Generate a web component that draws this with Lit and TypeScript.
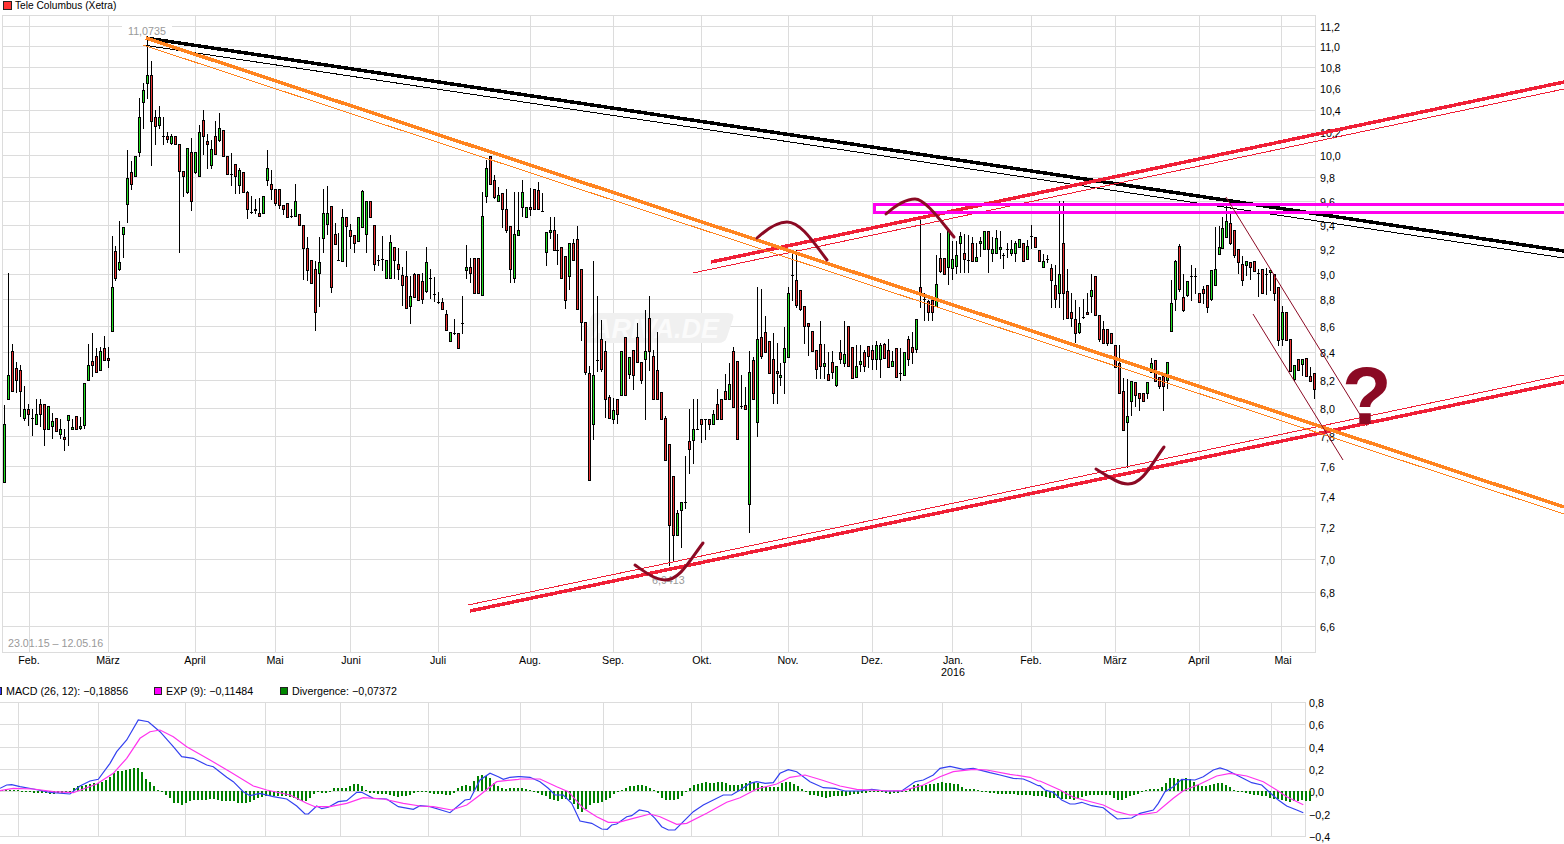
import { LitElement, html, svg, css } from "lit";
import { customElement } from "lit/decorators.js";

type Candle = [number, number, number, number, number]; // body top, body bottom, wick top, wick bottom, 0 red / 1 green / 2 doji
type Pt = [number, number];

const CANDLES: Candle[] = [
  [424,482,405,482,1],[375,399,273,399,1],[351,391,344,391,0],[368,380,362,392,0],[370,391,365,416,0],
  [409,418,386,420,1],[409,414,404,425,0],[418,418,409,435,2],[414,424,399,424,1],[404,414,399,426,0],
  [404,429,404,445,0],[406,429,406,429,1],[421,426,413,438,1],[418,431,418,431,0],[429,434,419,438,1],
  [437,439,429,450,0],[415,420,415,445,1],[427,429,419,429,1],[416,429,416,429,0],[426,428,417,429,1],
  [383,425,383,428,1],[365,380,344,380,1],[361,365,333,376,0],[356,372,348,372,0],[351,370,347,370,1],
  [348,360,336,360,0],[358,360,347,367,0],[287,331,236,331,1],[251,278,246,280,0],[262,269,221,270,1],
  [227,234,227,257,1],[178,204,150,222,1],[172,184,161,189,0],[156,176,156,176,1],[117,152,98,156,1],
  [90,102,83,128,1],[75,83,38,98,1],[75,121,61,165,0],[117,126,110,144,0],[117,125,106,128,1],
  [136,136,117,144,2],[136,139,132,142,0],[136,143,134,144,1],[136,144,136,144,0],[144,171,144,252,0],
  [171,176,171,196,0],[148,192,148,193,1],[152,201,138,210,0],[152,172,152,173,1],[132,176,125,176,1],
  [120,136,110,154,0],[141,144,134,168,0],[149,165,140,168,1],[136,154,121,154,0],[128,140,113,141,1],
  [130,156,130,156,0],[156,174,156,174,0],[174,174,153,185,2],[164,176,164,193,0],[170,185,168,193,1],
  [172,192,172,192,0],[192,209,191,218,0],[212,212,196,213,2],[209,210,199,213,0],[213,216,198,216,0],
  [196,213,196,213,1],[168,180,150,185,1],[184,189,170,199,0],[189,203,189,205,0],[189,205,189,208,0],
  [205,209,205,214,0],[203,217,203,217,0],[216,216,209,217,2],[201,216,184,216,1],[214,225,214,225,0],
  [225,248,225,279,0],[248,270,237,280,0],[260,283,260,283,0],[269,312,261,330,0],[262,273,237,306,1],
  [213,238,189,252,1],[213,224,186,234,1],[206,287,206,292,0],[234,244,223,244,0],[260,260,233,260,2],
  [217,261,209,261,1],[217,226,217,266,0],[230,236,224,248,0],[235,243,235,252,0],[217,241,217,241,1],
  [191,227,190,227,1],[201,234,201,252,1],[201,217,201,217,0],[225,264,225,270,0],[260,260,255,265,2],
  [259,259,236,270,2],[260,278,260,278,1],[242,278,235,278,1],[247,260,247,278,0],[264,269,248,279,0],
  [275,285,267,305,0],[276,308,251,308,0],[296,306,276,323,1],[274,297,273,297,0],[274,300,274,300,0],
  [281,299,273,303,0],[262,291,247,292,1],[278,278,269,298,2],[294,294,277,301,2],[302,302,292,303,2],
  [302,309,298,309,0],[314,330,310,330,0],[332,341,332,341,1],[333,333,319,334,2],[333,348,333,348,0],
  [323,323,296,333,2],[267,270,245,278,1],[267,273,258,282,0],[258,293,258,293,0],[258,293,258,293,0],
  [216,295,192,295,1],[168,196,160,202,1],[156,184,156,184,0],[180,197,175,198,0],[195,201,187,201,1],
  [193,209,193,227,0],[209,230,189,232,0],[226,269,226,282,0],[234,278,192,282,1],[230,235,192,235,1],
  [192,207,180,216,1],[207,217,207,217,1],[207,209,188,215,0],[189,209,189,209,0],[190,209,182,209,0],
  [211,211,193,211,2],[232,252,232,265,1],[230,232,217,238,1],[230,250,217,250,0],[250,250,234,264,2],
  [247,278,247,278,0],[256,300,256,308,0],[243,276,243,289,1],[243,260,239,260,0],[239,309,226,309,0],
  [269,322,269,340,0],[322,372,322,374,0],[373,480,366,480,0],[375,424,261,439,1],[360,360,296,371,2],
  [339,369,320,371,0],[351,399,341,417,0],[397,418,395,418,0],[410,419,398,423,1],[399,414,399,423,0],
  [351,395,351,395,1],[337,395,337,395,0],[357,374,357,378,1],[350,375,350,389,0],[337,362,323,362,0],
  [362,380,362,383,0],[351,359,310,419,1],[318,351,296,370,0],[356,399,350,399,0],[370,399,332,399,0],
  [392,419,392,419,0],[418,460,416,460,0],[444,525,444,565,0],[476,535,476,560,0],[513,535,510,535,1],
  [502,510,502,547,1],[502,502,456,508,2],[441,449,409,473,0],[429,440,399,463,1],[429,429,399,429,2],
  [419,424,419,442,0],[419,419,419,439,2],[419,424,419,429,0],[414,424,410,424,1],[404,419,389,419,0],
  [399,419,399,419,0],[391,399,374,399,0],[384,399,363,399,1],[351,407,347,407,0],[361,439,361,439,0],
  [406,406,375,408,2],[405,409,387,409,0],[372,504,351,532,1],[360,399,357,399,0],[339,422,287,436,1],
  [337,356,289,358,0],[332,352,316,352,0],[341,373,341,373,0],[359,393,333,403,0],[371,373,343,403,0],
  [375,377,363,385,1],[348,362,327,393,1],[293,357,287,357,1],[275,275,250,300,2],[280,305,250,307,0],
  [290,309,290,310,0],[306,326,306,343,0],[323,326,323,355,0],[331,351,331,351,0],[350,369,350,378,0],
  [344,366,321,378,0],[363,366,344,378,1],[374,380,352,380,0],[362,372,351,378,0],[366,385,366,386,1],
  [352,359,340,363,0],[354,363,321,366,1],[326,366,326,366,0],[347,378,347,378,0],[366,377,345,377,1],
  [361,364,345,371,1],[352,366,350,371,0],[346,356,346,367,0],[350,359,345,369,0],[345,359,341,369,1],
  [345,359,343,377,1],[344,358,343,358,0],[350,367,339,367,0],[361,366,351,366,1],[348,377,348,377,0],
  [373,373,348,380,2],[352,375,352,375,1],[339,359,336,365,0],[347,352,332,363,0],[319,349,319,352,1],
  [287,294,217,307,0],[299,299,293,320,2],[301,312,300,320,0],[300,312,300,320,0],[284,306,255,306,1],
  [258,271,233,272,0],[258,274,258,274,0],[231,267,231,284,1],[259,268,241,279,1],[255,266,241,273,1],
  [236,243,232,272,1],[253,259,234,272,0],[260,260,235,272,2],[243,261,237,261,0],[257,261,243,261,1],
  [241,243,237,256,1],[231,249,231,249,1],[231,249,231,272,0],[249,253,237,261,1],[238,253,230,253,1],
  [247,249,231,258,1],[255,255,253,268,2],[249,249,243,257,2],[249,253,240,255,1],[243,253,241,261,1],
  [239,247,239,247,1],[243,261,243,261,0],[246,259,240,259,1],[236,236,225,248,2],[237,247,237,247,0],
  [250,261,250,261,0],[261,267,254,267,1],[259,259,255,262,2],[268,280,264,307,0],[285,299,265,307,0],
  [274,293,201,307,1],[243,293,201,319,0],[291,318,269,318,0],[312,318,293,326,0],[319,333,300,342,0],
  [323,332,307,333,1],[317,317,299,318,2],[312,314,293,314,0],[290,296,274,312,1],[276,315,276,315,0],
  [315,339,315,341,0],[329,343,321,343,0],[329,343,329,345,0],[333,343,333,343,0],[345,367,345,367,0],
  [363,393,345,393,0],[391,430,378,430,0],[416,422,379,467,1],[381,401,381,415,1],[382,395,382,406,0],
  [393,398,393,410,0],[393,401,393,401,0],[382,393,382,398,1],[363,372,358,372,1],[360,381,360,381,0],
  [377,386,377,388,0],[376,386,376,410,0],[362,380,362,388,1],[303,331,280,331,1],[261,299,260,310,1],
  [246,289,244,291,0],[297,310,274,311,0],[281,295,281,296,1],[276,276,265,300,2],[276,276,268,293,2],
  [293,302,293,302,0],[289,293,286,303,0],[285,307,285,312,0],[270,299,270,300,1],[269,285,227,285,1],
  [247,254,226,254,1],[228,248,217,248,1],[221,237,205,237,1],[223,243,213,244,0],[230,255,230,257,0],
  [249,262,249,273,0],[264,280,256,285,0],[261,265,261,275,1],[262,267,262,279,0],[261,271,261,271,0],
  [273,273,269,296,2],[269,293,269,293,0],[274,274,268,294,2],[270,272,270,290,1],[274,293,274,300,0],
  [287,340,287,345,0],[312,339,306,345,1],[312,340,312,340,0],[339,371,339,371,0],[365,379,365,380,1],
  [359,370,359,370,0],[359,364,359,375,1],[358,376,358,376,0],[376,381,367,381,0],[373,389,373,398,0],
];

const XGRID = [29,108,195,275,350,438,530,613,701,788,872,952,1031,1115,1199,1281];
const YGRID: [number, string][] = [
  [26,"11,2"],[46,"11,0"],[67,"10,8"],[88,"10,6"],[110,"10,4"],[132,"10,2"],[155,"10,0"],[177,"9,8"],
  [201,"9,6"],[225,"9,4"],[249,"9,2"],[274,"9,0"],[299,"8,8"],[326,"8,6"],[352,"8,4"],[380,"8,2"],
  [408,"8,0"],[436,"7,8"],[466,"7,6"],[496,"7,4"],[527,"7,2"],[559,"7,0"],[592,"6,8"],[626,"6,6"],
];
const MONTHS: [number, string][] = [
  [29,"Feb."],[108,"März"],[195,"April"],[275,"Mai"],[351,"Juni"],[438,"Juli"],[530,"Aug."],[613,"Sep."],
  [702,"Okt."],[788,"Nov."],[872,"Dez."],[953,"Jan."],[1031,"Feb."],[1115,"März"],[1199,"April"],[1283,"Mai"],
];

const MACD_X = [18,98,185,265,340,428,520,603,691,778,862,942,1021,1105,1189,1271];
const MACD_Y: [number, string][] = [
  [702,"0,8"],[724,"0,6"],[747,"0,4"],[769,"0,2"],[791,"0,0"],[814,"\u22120,2"],[836,"\u22120,4"],
];

// divergence bars, one per 4px, height in px above (+) or below (-) the zero line
const DIV = [
  1,2,1,1,1,0,-1,-1,-2,-2,-2,-2,-3,-3,-2,-2,-1,0,3,5,5,6,7,8,8,9,11,14,18,20,20,21,22,23,23,19,12,9,5,1,0,
  -4,-7,-12,-12,-14,-12,-10,-9,-9,-9,-9,-8,-8,-9,-10,-10,-10,-10,-12,-12,-12,-11,-9,-7,-6,-5,-5,-5,-5,-5,-5,
  -6,-7,-9,-10,-10,-7,-3,0,-2,-2,-1,3,3,3,3,5,7,7,5,1,-2,-2,-3,-3,-3,-4,-5,-6,-5,-5,-4,-2,-1,0,-1,-2,-3,-3,-3,
  -4,-4,-2,3,5,6,5,10,15,16,15,13,8,5,3,2,3,3,3,
  3,2,1,0,-2,-4,-5,-8,-9,-10,-8,-8,-9,-13,-18,-21,-18,-14,-12,-12,-11,-9,-7,-3,-1,1,3,5,5,6,6,5,3,1,-2,-7,-9,-9,-9,
  -8,-5,-1,3,6,7,8,9,8,8,9,9,8,6,6,6,7,8,10,9,8,5,4,4,4,4,8,9,9,7,5,2,0,-4,-4,-5,-6,-7,-6,-5,-5,-5,-5,-4,-3,-3,-2,
  -2,-1,0,-1,-1,-2,-3,-2,-2,-1,0,2,6,7,6,6,7,7,8,9,8,8,7,7,4,2,2,2,1,0,-1,-2,-2,-3,-3,-3,-3,-3,-4,-4,-4,-4,-5,-5,-5,
  -6,-7,-7,-7,-8,-8,-8,-9,-8,-6,-5,-4,-4,-4,-4,-4,-4,-7,-9,-9,-7,-5,-4,-3,-1,1,2,2,2,4,8,13,13,12,12,13,12,9,6,5,5,
  6,7,8,8,6,4,1,0,-1,-2,-3,-4,-4,-5,-5,-7,-8,-8,-9,-10,-11,-10,-10,-9,-10,-10,
];

// MACD curves, points read off per 3x crop: (x * 3, y * 3) relative to the crop origin
const crop = (ox: number, oy: number, pts: Pt[]): Pt[] =>
  pts.map(([x, y]): Pt => [ox + x / 3, oy + y / 3]);

const BLUE: Pt[] = [
  ...crop(0, 620, [[0,505],[20,495],[35,494],[60,500],[100,507],[150,517],[210,522],[240,498],[270,483],[295,478],[330,430],[350,395],[380,360],[415,300],[445,305],[480,335],[520,380],[545,410],[580,415],[620,435],[640,440],[680,472],[700,485],[730,515],[750,527],[780,520],[820,530],[860,537],[890,558],[915,582],[925,582],[950,558],[965,566],[985,562],[1015,545],[1040,542],[1070,517],[1085,517],[1120,535],[1160,537],[1195,560],[1240,568],[1260,557],[1290,560],[1350,578],[1395,540],[1410,538],[1440,480],[1470,460],[1495,470],[1510,478],[1530,472],[1555,470]]),
  ...crop(520, 640, [[0,410],[30,412],[60,425],[85,445],[105,465],[130,465],[155,490],[180,543],[215,550],[245,567],[262,568],[275,555],[290,552],[320,530],[335,527],[358,510],[385,515],[405,535],[425,560],[445,570],[465,570],[490,545],[520,515],[550,495],[580,480],[610,465],[635,465],[660,450],[690,430],[710,425],[735,430],[760,428],[780,400],[805,389],[830,395],[870,425],[910,443],[945,445],[975,453],[1020,453],[1055,448],[1095,453],[1145,453],[1185,425],[1210,420],[1240,405],[1260,385],[1290,379],[1330,388],[1360,385],[1410,398],[1440,405],[1480,415],[1510,417],[1530,425],[1555,437]]),
  ...crop(1040, 640, [[0,437],[15,450],[40,457],[65,480],[90,492],[105,492],[125,487],[155,497],[190,503],[210,520],[232,537],[275,534],[300,520],[340,510],[355,490],[375,455],[400,440],[425,418],[465,420],[490,410],[520,390],[540,384],[560,390],[600,410],[635,428],[665,435],[690,458],[715,480],[740,498],[770,510],[790,518]]),
];
const PINK: Pt[] = [
  ...crop(0, 620, [[0,512],[40,505],[100,507],[160,515],[220,518],[290,492],[340,460],[380,415],[420,355],[450,335],[480,330],[520,350],[560,380],[630,420],[690,455],[760,498],[800,510],[870,525],[920,550],[945,560],[990,560],[1040,550],[1090,533],[1150,537],[1210,550],[1260,558],[1300,560],[1355,570],[1400,555],[1440,525],[1490,485],[1555,478]]),
  ...crop(520, 640, [[0,417],[60,417],[110,440],[145,455],[190,505],[230,530],[265,547],[295,547],[340,535],[390,522],[420,530],[470,553],[500,550],[560,520],[620,487],[660,473],[710,447],[770,432],[810,412],[855,405],[905,420],[960,438],[1010,448],[1050,450],[1110,453],[1150,452],[1210,435],[1260,410],[1300,395],[1360,388],[1400,390],[1470,403],[1530,412],[1555,423]]),
  ...crop(1040, 640, [[0,423],[60,450],[100,472],[190,495],[230,515],[270,525],[310,523],[350,517],[400,475],[430,452],[480,432],[530,408],[570,400],[620,408],[670,425],[710,450],[740,470],[790,494]]),
];

const toPoints = (pts: Pt[]) => pts.map(([x, y]) => `${x.toFixed(1)},${y.toFixed(1)}`).join(" ");

@customElement("app-root")
export class AppRoot extends LitElement {
  static styles = css`
    :host {
      display: block;
      width: 1564px;
      height: 844px;
      overflow: hidden;
      background: #fff;
      font-family: "Liberation Sans", Arial, sans-serif;
      font-size: 10.7px;
      color: #000;
    }
    svg { display: block; }
    svg text { font-family: "Liberation Sans", Arial, sans-serif; font-size: 10.7px; }

    .title {
      height: 15px;
      display: flex;
      align-items: flex-start;
      gap: 3px;
      padding: 2px 0 0 3px;
      box-sizing: border-box;
      line-height: 8px;
      font-size: 10.2px;
    }
    .swatch {
      width: 7px;
      height: 7px;
      flex: none;
      box-sizing: content-box;
      border: 1px solid #222;
      margin-top: -1px;
    }
    .legend {
      height: 16px;
      padding-top: 2px;
      box-sizing: border-box;
      display: flex;
      align-items: center;
      margin-left: -6px;
    }
    .item { display: flex; align-items: center; gap: 4px; }
    .item-macd { width: 160px; }
    .item-exp { width: 126px; }
    .legend .swatch { width: 6px; height: 6px; margin: 0; }
    .red { background: #f33; }
    .blue { background: #33f; }
    .pink { background: #f0f; }
    .green { background: #080; }

    .grid { stroke: #dcdcdc; stroke-width: 1; shape-rendering: crispEdges; }
    .axis { fill: #000; }
    .note { fill: #999; }
    .wm-box { fill: #f0f0f0; }
    .wm-text { fill: #fbfbfb; font-weight: bold; font-style: italic; font-size: 27px !important; }
    .wick { stroke: #000; stroke-width: 1; shape-rendering: crispEdges; }
    .body { stroke: #000; stroke-width: 1; shape-rendering: crispEdges; }
    .up { fill: #22dd22; }
    .down { fill: #e83333; }
    .doji { fill: #000; shape-rendering: crispEdges; }
    .bar { fill: #008000; shape-rendering: crispEdges; }
    .trend { fill: none; shape-rendering: crispEdges; }
    .t-black { stroke: #000; }
    .t-red { stroke: #f01f36; }
    .t-orange { stroke: #ff8420; }
    .zone { fill: none; stroke: #ff00ee; stroke-width: 3; shape-rendering: crispEdges; }
    .curve { fill: none; stroke: #8b0a24; stroke-width: 3; stroke-linecap: round; }
    .channel { stroke: #8b0a24; stroke-width: 1; }
    .mark { fill: #8b0a24; font-weight: bold; font-size: 81px !important; }
    .macd-line { fill: none; stroke-width: 1.2; }
    .l-blue { stroke: #3340f0; }
    .l-pink { stroke: #ff33ee; }
  `;

  private trend(x1: number, y1: number, x2: number, y2: number, cls: string, w: number) {
    return svg`<line class="trend ${cls}" x1=${x1} y1=${y1} x2=${x2} y2=${y2} stroke-width=${w}></line>`;
  }

  private candles() {
    return CANDLES.map(([t, b, wt, wb, c], i) => {
      const x = Math.round(4 + 3.982 * i);
      const wick = svg`<line class="wick" x1=${x + 0.5} x2=${x + 0.5} y1=${wt} y2=${wb + 1}></line>`;
      if (c === 2) return svg`${wick}<rect class="doji" x=${x - 1} y=${t} width="3" height="1"></rect>`;
      return svg`${wick}<rect class="body ${c ? "up" : "down"}" x=${x - 0.5} y=${t + 0.5} width="2" height=${Math.max(b - t, 1)}></rect>`;
    });
  }

  private priceChart() {
    return svg`
      <svg width="1564" height="667" viewBox="0 15 1564 667">
        ${YGRID.map(([y]) => svg`<line class="grid" x1="2" x2="1316" y1=${y + 0.5} y2=${y + 0.5}></line>`)}
        ${XGRID.map((x) => svg`<line class="grid" x1=${x + 0.5} x2=${x + 0.5} y1="15" y2="653"></line>`)}
        <rect class="grid" fill="none" x="2.5" y="15.5" width="1313" height="637"></rect>

        <path class="wm-box" d="M596 313 H728 Q735 313 733 319 L727 337 Q725 343 718 343 H590 Q583 343 585 337 L590 319 Q592 313 596 313 Z"></path>
        <text class="wm-text" x="592" y="338">ARIVA.DE</text>

        ${YGRID.map(([y, l]) => svg`<text class="axis" x="1320" y=${y + 5}>${l}</text>`)}
        ${MONTHS.map(([x, l]) => svg`<text class="axis" x=${x} y="664" text-anchor="middle">${l}</text>`)}
        <text class="axis" x="953" y="676" text-anchor="middle">2016</text>

        <rect fill="#fff" x="122" y="26" width="50" height="10"></rect>
        <text class="note" x="128" y="35">11,0735</text>
        <text class="note" x="652" y="584">6,9413</text>
        <text class="note" x="8" y="647">23.01.15 – 12.05.16</text>

        ${this.candles()}

        ${this.trend(143, 45, 1564, 258, "t-black", 1)}
        ${this.trend(146, 38, 1564, 251, "t-black", 3.5)}
        ${this.trend(468, 605, 1564, 375, "t-red", 1)}
        ${this.trend(470, 611, 1564, 382, "t-red", 3.5)}
        ${this.trend(693, 273, 1564, 89, "t-red", 1)}
        ${this.trend(711, 262, 1564, 82, "t-red", 3.5)}
        ${this.trend(143, 45, 1564, 514, "t-orange", 1)}
        ${this.trend(146, 38, 1564, 507, "t-orange", 3.5)}
        <path class="zone" d="M1564 204.5 H874.5 V212.5 H1564"></path>

        <path class="curve" d="M757 238 C768 228 778 222 787 222 C800 222 812 240 827 260"></path>
        <path class="curve" d="M886 214 C895 206 905 199 915 199 C925 199 940 220 954 237"></path>
        <path class="curve" d="M635 565 C645 572 655 580 665 580 C680 580 690 560 703 543"></path>
        <path class="curve" d="M1096 469 C1106 475 1118 484 1128 484 C1143 484 1152 463 1164 447"></path>
        <line class="channel" x1="1226" y1="197" x2="1367" y2="426"></line>
        <line class="channel" x1="1253" y1="314" x2="1343" y2="460"></line>
        <text class="mark" x="1342" y="424">?</text>
      </svg>
    `;
  }

  private macdChart() {
    return svg`
      <svg width="1564" height="146" viewBox="0 698 1564 146">
        ${MACD_Y.map(([y]) => svg`<line class="grid" x1="0" x2="1306" y1=${y + 0.5} y2=${y + 0.5}></line>`)}
        ${MACD_X.map((x) => svg`<line class="grid" x1=${x + 0.5} x2=${x + 0.5} y1="702" y2="837"></line>`)}
        <line class="grid" x1="1305.5" x2="1305.5" y1="702" y2="837"></line>
        ${MACD_Y.map(([y, l]) => svg`<text class="axis" x="1309" y=${y + 5}>${l}</text>`)}
        ${DIV.map((v, i) => {
          const x = 1 + 4 * i;
          const h = Math.max(Math.abs(v), 1);
          return svg`<rect class="bar" x=${x} y=${v > 0 ? 791 - h : 791} width="2" height=${h}></rect>`;
        })}
        <polyline class="macd-line l-blue" points=${toPoints(BLUE)}></polyline>
        <polyline class="macd-line l-pink" points=${toPoints(PINK)}></polyline>
      </svg>
    `;
  }

  render() {
    return html`
      <div class="title"><span class="swatch red"></span><span>Tele Columbus (Xetra)</span></div>
      ${this.priceChart()}
      <div class="legend">
        <div class="item item-macd"><span class="swatch blue"></span><span>MACD (26, 12): −0,18856</span></div>
        <div class="item item-exp"><span class="swatch pink"></span><span>EXP (9): −0,11484</span></div>
        <div class="item"><span class="swatch green"></span><span>Divergence: −0,07372</span></div>
      </div>
      ${this.macdChart()}
    `;
  }
}
